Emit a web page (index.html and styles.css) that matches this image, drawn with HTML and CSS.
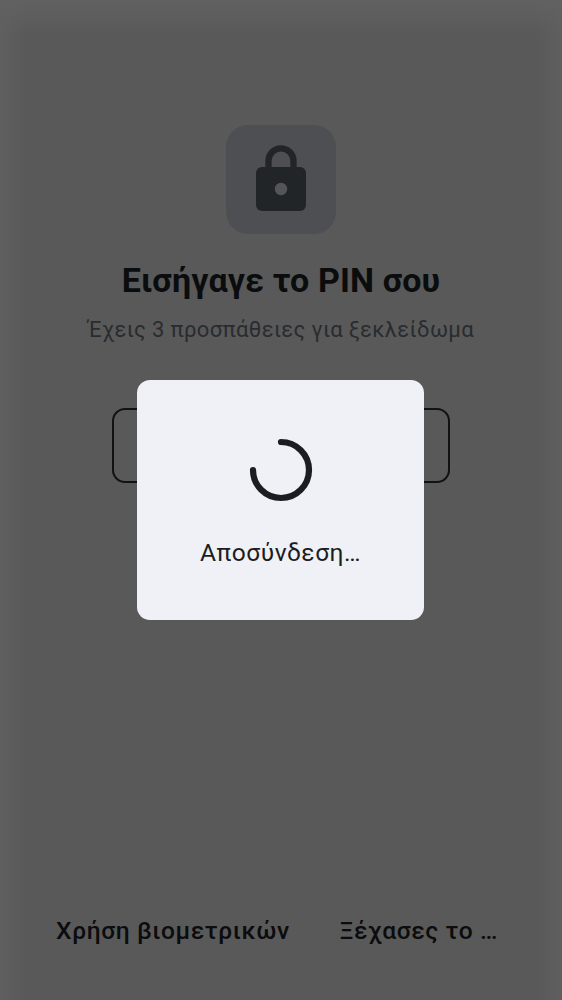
FILE: index.html
```html
<!DOCTYPE html>
<html lang="el">
<head>
<meta charset="utf-8">
<title>PIN</title>
<link rel="stylesheet" href="styles.css">
</head>
<body>
<main class="screen">
  <div class="lock-tile">
    <svg class="lock" viewBox="0 0 50 66" width="50" height="66">
      <path d="M12.500 24V15.800a12.500 12.500 0 0 1 25 0V24" fill="none" stroke="#212528" stroke-width="6.300"/>
      <rect y="22" width="50" height="44" rx="6" fill="#212528"/>
      <circle cx="25" cy="44" r="6.200" fill="#545558"/>
    </svg>
  </div>
  <h1 class="title">Εισήγαγε το PIN σου</h1>
  <p class="subtitle">Έχεις 3 προσπάθειες για ξεκλείδωμα</p>
  <div class="pin-field"></div>
  <footer class="actions">
    <span class="action">Χρήση βιομετρικών</span>
    <span class="action">Ξέχασες το …</span>
  </footer>
</main>
<div class="dialog">
  <svg class="spinner" viewBox="0 0 64 64" width="64" height="64">
    <path d="M32 4A28 28 0 1 1 4 32" fill="none" stroke="#1b1d21" stroke-width="6.200" stroke-linecap="round"/>
  </svg>
  <p class="message">Αποσύνδεση…</p>
</div>
</body>
</html>
```
FILE: styles.css
```css
* { box-sizing: border-box; margin: 0; }
body { height: 1000px; overflow: hidden; font-family: Roboto, "Noto Sans", sans-serif; }
.screen {
  height: 1000px;
  padding-top: 125px;
  display: flex;
  flex-direction: column;
  align-items: center;
  background:
    linear-gradient(#616161, #61616100 36px),
    linear-gradient(90deg, #5f5f5f, #5f5f5f00 26px, #5f5f5f00 calc(100% - 26px), #5f5f5f),
    #595959;
}
.lock-tile {
  width: 110px;
  height: 109px;
  padding-top: 20px;
  display: flex;
  justify-content: center;
  border-radius: 22px;
  background: #4e4f53;
}
.title { margin-top: 26px; font-size: 34px; line-height: 40px; letter-spacing: .1px; font-weight: 700; color: #0b0c0d; white-space: nowrap; }
.subtitle { margin-top: 16px; font-size: 22px; line-height: 28px; letter-spacing: .35px; color: #292c2f; white-space: nowrap; }
.pin-field { margin-top: 64px; width: 338px; height: 75px; border: 2px solid #111213; border-radius: 13px; }
.actions { margin-top: auto; width: 100%; padding: 0 64px 53px 56px; display: flex; justify-content: space-between; }
.action { font-size: 24.600px; line-height: 32px; letter-spacing: .6px; font-weight: 500; color: #0b0c0d; white-space: nowrap; }
.dialog {
  position: absolute;
  left: 137px;
  top: 380px;
  width: 287px;
  height: 240px;
  padding-top: 58px;
  display: flex;
  flex-direction: column;
  align-items: center;
  border-radius: 13px;
  background: #f0f1f6;
}
.message { margin-top: 35px; font-size: 24.600px; line-height: 32px; letter-spacing: .5px; color: #1b1d21; white-space: nowrap; }
```
